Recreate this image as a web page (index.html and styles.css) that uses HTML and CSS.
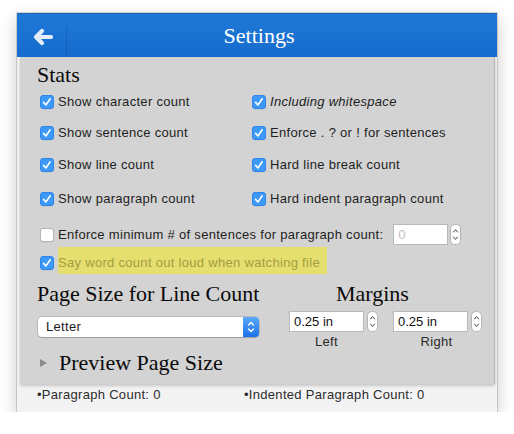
FILE: index.html
```html
<!DOCTYPE html>
<html>
<head>
<meta charset="utf-8">
<link rel="stylesheet" href="styles.css">
</head>
<body>
<div class="window">
  <header class="titlebar">
    <div class="back">
      <svg width="22" height="18" viewBox="0 0 22 18"><path d="M19 9 H5 M10 3 L4 9 L10 15" fill="none" stroke="#e4edf9" stroke-width="4.2" stroke-linecap="round" stroke-linejoin="round"/></svg>
    </div>
    <h1 class="title">Settings</h1>
  </header>
  <div class="panel">
    <h2 class="heading">Stats</h2>
    <div class="grid">
      <label class="check"><span class="box on"></span><span>Show character count</span></label>
      <label class="check"><span class="box on"></span><span class="italic">Including whitespace</span></label>
      <label class="check"><span class="box on"></span><span>Show sentence count</span></label>
      <label class="check"><span class="box on"></span><span>Enforce . ? or ! for sentences</span></label>
      <label class="check"><span class="box on"></span><span>Show line count</span></label>
      <label class="check"><span class="box on"></span><span>Hard line break count</span></label>
      <label class="check"><span class="box on"></span><span>Show paragraph count</span></label>
      <label class="check"><span class="box on"></span><span>Hard indent paragraph count</span></label>
    </div>
    <div class="check enforce">
      <span class="box"></span><span>Enforce minimum # of sentences for paragraph count:</span>
      <span class="field small placeholder">0</span>
      <span class="stepper"></span>
    </div>
    <div class="check say">
      <span class="box on"></span><span class="hl">Say word count out loud when watching file</span>
    </div>
    <div class="pagesection">
      <div class="pagecol">
        <h2 class="heading nowrap">Page Size for Line Count</h2>
        <div class="select"><span class="select-text">Letter</span><span class="select-btn"></span></div>
      </div>
      <div class="margincol">
        <h2 class="heading margins">Margins</h2>
        <div class="margininputs">
          <div class="mgroup">
            <div class="mrow"><span class="field">0.25 in</span><span class="stepper"></span></div>
            <div class="mlabel">Left</div>
          </div>
          <div class="mgroup">
            <div class="mrow"><span class="field">0.25 in</span><span class="stepper"></span></div>
            <div class="mlabel right">Right</div>
          </div>
        </div>
      </div>
    </div>
    <div class="preview"><span class="tri"></span><h2 class="heading">Preview Page Size</h2></div>
  </div>
  <div class="footer">
    <span>•Paragraph Count: 0</span>
    <span>•Indented Paragraph Count: 0</span>
  </div>
</div>
</body>
</html>
```
FILE: styles.css
```css
html, body {
  margin: 0;
  background: #ffffff;
}
body {
  font-family: "Liberation Sans", Arial, sans-serif;
  font-size: 13px;
  color: #1e1e1e;
}
.window {
  margin: 13px 0 0 17px;
  width: 480px;
  height: 399px;
  background: #f3f3f3;
  box-shadow: 0 0 0 1px rgba(0,0,0,0.14), 0 6px 16px rgba(0,0,0,0.22);
  display: flex;
  flex-direction: column;
}
.titlebar {
  height: 44px;
  flex: none;
  display: flex;
  align-items: center;
  background: linear-gradient(#1f78d7, #166ccd);
  box-shadow: inset 0 1px 0 rgba(0,0,0,0.15);
}
.back {
  width: 50px;
  height: 32px;
  margin-top: 12px;
  align-self: flex-start;
  border-right: 1px solid rgba(0,0,0,0.12);
  box-sizing: border-box;
  display: flex;
  align-items: flex-start;
  padding: 3px 0 0 15px;
}
.title {
  flex: 1;
  margin: 0;
  padding: 0 46px 0 0;
  text-align: center;
  font-family: "Liberation Serif", "Times New Roman", serif;
  font-weight: normal;
  font-size: 22px;
  color: #ffffff;
  line-height: 25px;
}
.panel {
  flex: none;
  height: 327px;
  margin: 0 2px 0 3px;
  box-sizing: border-box;
  padding: 5px 0 0 17px;
  background: #d3d3d3;
  border-right: 1px solid #b5b5b5;
  box-shadow: 0 2px 3px rgba(0,0,0,0.18);
  display: flex;
  flex-direction: column;
}
.heading {
  margin: 0;
  font-family: "Liberation Serif", "Times New Roman", serif;
  font-weight: normal;
  font-size: 22px;
  line-height: 25px;
  color: #0a0a0a;
}
.nowrap {
  white-space: nowrap;
}
.grid {
  display: grid;
  grid-template-columns: 212px 1fr;
  grid-template-rows: 30px 32px 32px 36px;
  margin-left: 3px;
}
.check {
  display: flex;
  align-items: center;
  gap: 4px;
  letter-spacing: 0.3px;
  line-height: 16px;
}
.italic {
  font-style: italic;
}
.box {
  width: 14px;
  height: 14px;
  flex: none;
  box-sizing: border-box;
  border-radius: 3px;
  background: #ffffff;
  border: 1px solid #b4b4b4;
  box-shadow: 0 0.5px 0 rgba(0,0,0,0.08);
}
.box.on {
  border: 1px solid #2f86ea;
  background: #3d98f7 url("data:image/svg+xml;utf8,<svg xmlns='http://www.w3.org/2000/svg' width='12' height='12' viewBox='0 0 12 12'><path d='M2.6 6.4 L4.9 9 L9.2 2.8' fill='none' stroke='white' stroke-width='1.6' stroke-linecap='round' stroke-linejoin='round'/></svg>") center/12px 12px no-repeat;
}
.enforce {
  margin: 5px 0 0 3px;
  height: 25px;
}
.field {
  display: flex;
  align-items: center;
  box-sizing: border-box;
  width: 75px;
  height: 21px;
  padding-left: 4px;
  background: #ffffff;
  border: 1px solid #b8b8b8;
  letter-spacing: 0;
  color: #111;
}
.field.small {
  width: 55px;
  margin-left: 6px;
}
.placeholder {
  color: #c2c2c2;
}
.stepper {
  width: 11px;
  height: 21px;
  flex: none;
  margin-left: -2px;
  background: url("data:image/svg+xml;utf8,<svg xmlns='http://www.w3.org/2000/svg' width='11' height='21' viewBox='0 0 11 21'><rect x='0.5' y='0.5' width='10' height='20' rx='4' fill='white' stroke='%23b3b3b3'/><path d='M3.5 8 L5.5 5.6 L7.5 8 M3.5 13 L5.5 15.4 L7.5 13' fill='none' stroke='%23444' stroke-width='1' stroke-linecap='round' stroke-linejoin='round'/></svg>") no-repeat;
}
.mrow .stepper {
  margin-left: 3px;
}
.say {
  margin-left: 3px;
  height: 27px;
}
.say .box {
  margin-top: 5px;
}
.hl {
  background: #e5df70;
  color: #a39d3e;
  padding: 8px 7px 3px 0;
}
.pagesection {
  display: flex;
  align-items: flex-start;
  margin-top: 7px;
}
.pagecol {
  width: 222px;
  flex: none;
}
.select {
  margin: 11px 0 0 1px;
  width: 221px;
  height: 20px;
  box-sizing: border-box;
  display: flex;
  background: #ffffff;
  border-radius: 4px;
  box-shadow: 0 0 0 0.5px rgba(0,0,0,0.25), 0 1px 1px rgba(0,0,0,0.15);
  overflow: hidden;
}
.select-text {
  flex: 1;
  padding-left: 8px;
  line-height: 20px;
  letter-spacing: 0.3px;
  color: #1a1a1a;
}
.select-btn {
  width: 16px;
  background: url("data:image/svg+xml;utf8,<svg xmlns='http://www.w3.org/2000/svg' width='16' height='20' viewBox='0 0 16 20'><path d='M5.5 8 L8 5.5 L10.5 8 M5.5 12 L8 14.5 L10.5 12' fill='none' stroke='white' stroke-width='1.4' stroke-linecap='round' stroke-linejoin='round'/></svg>") center no-repeat, linear-gradient(#5aa9fc, #1d72ea);
}
.margincol {
  margin-left: 30px;
}
.margins {
  padding-left: 47px;
}
.margininputs {
  display: flex;
  gap: 15px;
  margin-top: 5px;
}
.mgroup {
  display: flex;
  flex-direction: column;
}
.mrow {
  display: flex;
}
.mlabel {
  width: 75px;
  margin-top: 2px;
  text-align: center;
  line-height: 16px;
  letter-spacing: 0.3px;
  color: #2a2a2a;
  padding-left: 0;
}
.mlabel.right {
  padding-left: 6px;
}
.preview {
  display: flex;
  align-items: center;
  margin: 0 0 0 3px;
  height: 24px;
}
.tri {
  width: 0;
  height: 0;
  border-top: 4.5px solid transparent;
  border-bottom: 4.5px solid transparent;
  border-left: 7px solid #8c8c8c;
  margin: 2px 12px 0 0;
}
.footer {
  flex: 1;
  display: grid;
  grid-template-columns: 207px 1fr;
  padding: 3px 0 0 20px;
  line-height: 16px;
  letter-spacing: 0.3px;
  color: #2c2c2c;
}
```
